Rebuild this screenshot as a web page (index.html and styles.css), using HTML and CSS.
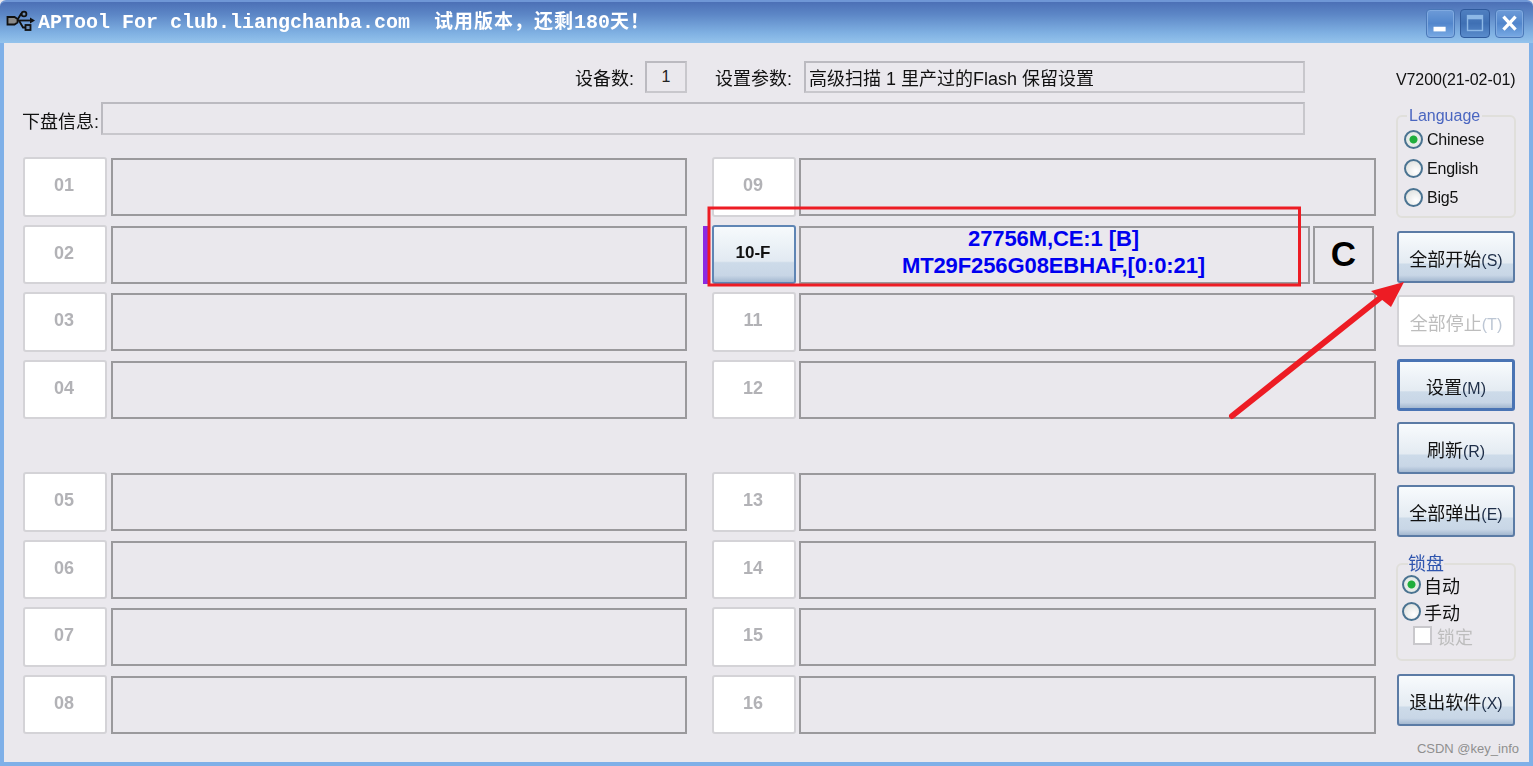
FILE: index.html
```
<!DOCTYPE html>
<html lang="zh">
<head>
<meta charset="utf-8">
<title>APTool</title>
<link rel="stylesheet" href="styles.css">
</head>
<body>
<div class="window">
  <header class="titlebar">
    <svg class="usb" width="28" height="28" viewBox="0 0 28 28" fill="none" stroke="#111" stroke-width="1.8">
      <path d="M10 11.5h15"/>
      <path d="M24 8.5l5 3-5 3z" fill="#111" stroke="none"/>
      <path d="M11 11.5l4-6.5h2M13 11.5l4 7h3"/>
      <circle cx="18" cy="5" r="2.4" fill="#6f8fb8"/>
      <rect x="19.5" y="16" width="5" height="5" fill="#6f8fb8"/>
      <path d="M1.5 8h7l3 2v3.500l-3 2h-7z" fill="#8a8a8a"/>
    </svg>
    <h1 class="title"><span>APTool For club.liangchanba.com</span><span class="title-cn">试用版本，还剩<span class="title-num">180</span>天！</span></h1>
    <div class="winbtns">
      <div class="winbtn"><svg width="29" height="29" viewBox="0 0 29 29"><rect x="7" y="18" width="13" height="5" fill="#fff"/></svg></div>
      <div class="winbtn winbtn-max"><svg width="30" height="29" viewBox="0 0 30 29"><rect x="7" y="6" width="16" height="16" fill="none" stroke="#8db8e6" stroke-width="1.500"/><rect x="7" y="6" width="16" height="4" fill="#8db8e6"/></svg></div>
      <div class="winbtn"><svg width="29" height="29" viewBox="0 0 29 29"><path d="M8 7l13 14M21 7L8 21" stroke="#fff" stroke-width="3.500"/></svg></div>
    </div>
  </header>

  <div class="client">
    <main class="main">
      <div class="info-row info-first">
        <span class="label">设备数:</span>
        <div class="box box-count">1</div>
        <span class="label label-params">设置参数:</span>
        <div class="box box-params">高级扫描 1 里产过的Flash 保留设置</div>
      </div>
      <div class="info-row info-second">
        <span class="label label-disk">下盘信息:</span>
        <div class="box box-disk"></div>
      </div>

      <div class="slots">
        <div class="slot-col slot-col-left">
          <div class="slot"><button class="port">01</button><div class="field"></div></div>
          <div class="slot"><button class="port">02</button><div class="field"></div></div>
          <div class="slot"><button class="port">03</button><div class="field"></div></div>
          <div class="slot slot-end"><button class="port">04</button><div class="field"></div></div>
          <div class="slot"><button class="port">05</button><div class="field"></div></div>
          <div class="slot"><button class="port">06</button><div class="field"></div></div>
          <div class="slot"><button class="port">07</button><div class="field"></div></div>
          <div class="slot"><button class="port">08</button><div class="field"></div></div>
        </div>
        <div class="slot-col">
          <div class="slot"><button class="port">09</button><div class="field"></div></div>
          <div class="slot slot-active">
            <span class="active-bar"></span>
            <button class="port port-on">10-F</button>
            <div class="field field-info"><div class="info-text">27756M,CE:1 [B]<br>MT29F256G08EBHAF,[0:0:21]</div></div>
            <div class="field field-c">C</div>
          </div>
          <div class="slot"><button class="port">11</button><div class="field"></div></div>
          <div class="slot slot-end"><button class="port">12</button><div class="field"></div></div>
          <div class="slot"><button class="port">13</button><div class="field"></div></div>
          <div class="slot"><button class="port">14</button><div class="field"></div></div>
          <div class="slot"><button class="port">15</button><div class="field"></div></div>
          <div class="slot"><button class="port">16</button><div class="field"></div></div>
        </div>
      </div>
    </main>

    <aside class="side">
      <div class="version">V7200(21-02-01)</div>
      <fieldset class="group group-lang">
        <legend>Language</legend>
        <div class="opt"><span class="radio radio-on"></span>Chinese</div>
        <div class="opt"><span class="radio"></span>English</div>
        <div class="opt"><span class="radio"></span>Big5</div>
      </fieldset>
      <button class="act act-first">全部开始<span class="key">(S)</span></button>
      <button class="act act-off">全部停止<span class="key">(T)</span></button>
      <button class="act act-default">设置<span class="key">(M)</span></button>
      <button class="act act-next">刷新<span class="key">(R)</span></button>
      <button class="act act-next">全部弹出<span class="key">(E)</span></button>
      <fieldset class="group group-lock">
        <legend>锁盘</legend>
        <div class="opt opt-cn opt-top"><span class="radio radio-on"></span>自动</div>
        <div class="opt opt-cn"><span class="radio"></span>手动</div>
        <div class="opt opt-check"><span class="check"></span>锁定</div>
      </fieldset>
      <button class="act act-exit">退出软件<span class="key">(X)</span></button>
    </aside>
  </div>

  <svg class="markup" width="1533" height="766" viewBox="0 0 1533 766">
    <rect x="709" y="208" width="590.5" height="77" fill="none" stroke="#ed1c24" stroke-width="3"/>
    <path d="M1232 416L1380 298" stroke="#ed1c24" stroke-width="6" stroke-linecap="round"/>
    <path d="M1404 282L1371 291L1391 307Z" fill="#ed1c24"/>
  </svg>
  <div class="watermark">CSDN @key_info</div>
</div>
</body>
</html>
```

FILE: styles.css
```
* { box-sizing: border-box; }
html, body { margin: 0; height: 100%; overflow: hidden; }
body {
  font-family: "Liberation Sans", "Noto Sans CJK SC", sans-serif;
  background: #eae8ed;
  color: #111;
}
.window {
  position: relative;
  width: 1533px;
  height: 766px;
  display: flex;
  flex-direction: column;
  border-bottom: 4px solid #7fb0e8;
  background: #eae8ed;
}
.titlebar {
  height: 43px;
  flex: none;
  display: flex;
  align-items: center;
  padding: 0 9px 0 6px;
  border-top: 2px solid #6f97d6;
  border-radius: 6px 6px 0 0;
  background: linear-gradient(#4c70b6 0%, #5c86c6 30%, #7fb0e2 75%, #94c3ec 100%);
  filter: blur(0.3px);
}
.usb { flex: none; margin-right: 4px; margin-top: 1px; overflow: visible; }
.title {
  margin: 0;
  font: bold 20px/1 "Liberation Mono", "Noto Sans CJK SC", monospace;
  color: #fff;
  white-space: nowrap;
}
.title-cn {
  margin-left: 24px;
  font-size: 19px;
  letter-spacing: 1px;
}
.title-num { font-size: 20px; letter-spacing: 0; }
.winbtns { margin-left: auto; display: flex; gap: 5px; margin-top: 2px; }
.winbtn {
  height: 29px;
  width: 29px;
  border: 1px solid #4a78b8;
  border-radius: 4px;
  box-shadow: inset 0 0 0 1px #80aae0;
  background: linear-gradient(#6d9bd8, #5286cc 50%, #78aae4);
  display: flex;
  align-items: center;
  justify-content: center;
  overflow: hidden;
}
.winbtn-max {
  width: 30px;
  border-color: #2f5a9c;
  box-shadow: none;
  background: linear-gradient(#4f7fc0, #3f70b4 50%, #5a8ccc);
}
.client {
  flex: 1;
  min-height: 0;
  display: flex;
  border-left: 4px solid #7fb0e8;
  border-right: 4px solid #7fb0e8;
}
.main { width: 1372px; flex: none; padding: 18px 0 0 19px; }
.info-row { display: flex; align-items: center; width: 1282px; font-size: 18px; }
.info-first { height: 32px; justify-content: flex-end; }
.info-second { height: 33px; margin-top: 9px; }
.label { white-space: nowrap; font-size: 18px; line-height: 24px; position: relative; top: 2px; filter: blur(0.3px); }
.label-params { margin-left: 28px; }
.label-disk { width: 78px; flex: none; margin-left: -1px; top: 3px; }
.box {
  height: 100%;
  border: 2px solid #bbbac0;
  border-right-color: #c8c7cc;
  border-bottom-color: #c8c7cc;
  background: #eae8ed;
  display: flex;
  align-items: center;
}
.box-count { width: 42px; margin-left: 11px; justify-content: center; font-size: 16px; color: #222; }
.box-params { width: 501px; margin-left: 12px; padding-left: 3px; font-size: 18px; filter: blur(0.3px); }
.box-disk { flex: 1; margin-left: 1px; }
.slots { display: flex; gap: 25px; margin-top: 22px; }
.slot-col { width: 664px; display: flex; flex-direction: column; gap: 8px; }
.slot { position: relative; height: 59.5px; display: flex; gap: 3px; }
.slot-col-left .slot { gap: 4px; }
.slot-end { margin-bottom: 45px; }
.port {
  width: 84px;
  flex: none;
  padding: 0 2px 2px 0;
  background: #fff;
  border: 2px solid #d4d3d7;
  border-radius: 3px;
  font: bold 18px "Liberation Sans", sans-serif;
  color: #b2b2b6;
  filter: blur(0.3px);
}
.port-on {
  border: 2px solid #5f85b4;
  background: linear-gradient(#f6fafc 0%, #e2eaf2 62%, #cddbe9 65%, #c8d6e6 88%, #a4b8d0 100%);
  color: #111;
  font-size: 17px;
}
.field {
  flex: 1;
  height: 58px;
  margin-top: 1px;
  border: 2px solid #9a999c;
  background: #eae8ed;
}
.field-info {
  padding-right: 2px;
  text-align: center;
  font-size: 22px;
  font-weight: bold;
  letter-spacing: -.1px;
  color: #0000f0;
}
.info-text { margin-top: -3px; line-height: 27px; }
.field-c {
  flex: none;
  width: 61px;
  margin-right: 2px;
  font-size: 35px;
  font-weight: bold;
  line-height: 52px;
  text-align: center;
  color: #000;
}
.active-bar {
  position: absolute;
  left: -9px;
  top: 1px;
  width: 5px;
  height: 58px;
  background: #8a2be2;
}
.side { width: 120px; flex: none; margin-left: 20px; display: flex; flex-direction: column; }
.version { margin-top: 27px; height: 20px; line-height: 20px; font-size: 16px; letter-spacing: -.1px; white-space: nowrap; filter: blur(0.3px); }
.group {
  margin: 0;
  padding: 0;
  min-width: 0;
  border: 2px solid #e0dfdb;
  border-radius: 6px;
  filter: blur(0.3px);
}
.group legend {
  margin-left: 9px;
  padding: 0 2px;
  line-height: 18px;
  font-size: 16px;
  color: #4a66c0;
}
.group-lang { margin-top: 17px; height: 111px; }
.group-lock { margin-top: 17px; height: 107px; }
.group-lock legend { margin-left: 10px; color: #2f55ae; font-size: 18px; line-height: 20px; padding: 0; }
.opt { display: flex; align-items: center; height: 29px; padding-left: 6px; gap: 4px; font-size: 16px; letter-spacing: -.2px; }
.opt-cn { height: 27px; padding-left: 4px; font-size: 18px; gap: 3px; letter-spacing: 0; }
.opt-top { margin-top: -3px; }
.opt-check { height: 21px; padding-left: 15px; font-size: 18px; color: #bdbdbd; gap: 5px; letter-spacing: 0; }
.radio {
  width: 19px;
  height: 19px;
  flex: none;
  border: 2px solid #4a7391;
  border-radius: 50%;
  background: radial-gradient(circle at 65% 70%, #fff, #e4e6e4 70%, #cfd2d0);
}
.radio-on { background: radial-gradient(circle, #1fae3c 0 3.5px, #e8eeea 4.5px, #dfe3df); }
.check { width: 19px; height: 19px; background: #fff; border: 2px solid #c9c8cc; }
.act {
  width: 118px;
  height: 52px;
  flex: none;
  padding: 1px 0 0;
  margin-left: 1px;
  border: 2px solid #5b7ba5;
  border-radius: 3px;
  background: linear-gradient(#f8fbfd 0%, #e4ebf2 62%, #cddbe9 65%, #c8d6e6 88%, #a4b8d0 100%);
  font: 18px "Liberation Sans", "Noto Sans CJK SC", sans-serif;
  color: #111;
  filter: blur(0.3px);
}
.key { font-size: 16px; color: #1e2e48; }
.act-first { margin-top: 13px; }
.act-off { margin-top: 12px; background: #fff; border-color: #d4d3d7; color: #bdbdbd; }
.act-off .key { color: #bcc6d4; }
.act-default { margin-top: 12px; border-color: #4a74b4; border-width: 3px; }
.act-next { margin-top: 11px; }
.act-exit { margin-top: 13px; }
.markup { position: absolute; left: 0; top: 0; pointer-events: none; }
.watermark {
  position: absolute;
  right: 14px;
  top: 741px;
  font-size: 13px;
  line-height: 16px;
  color: #8f8f8f;
}
```
